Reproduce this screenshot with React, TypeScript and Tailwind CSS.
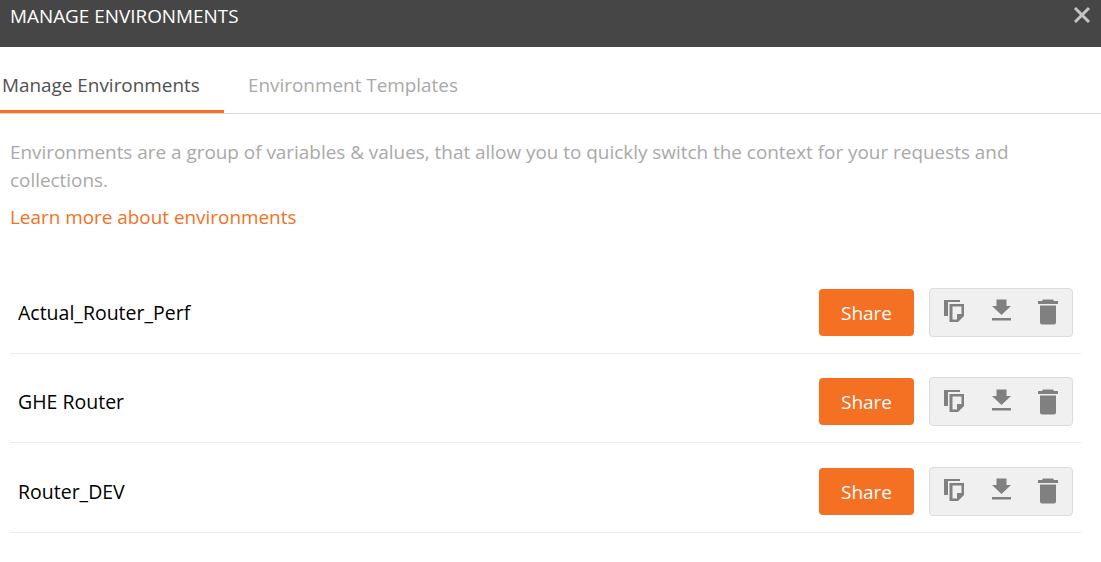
const environments = ["Actual_Router_Perf", "GHE Router", "Router_DEV"];

// all three icons share a 26px tall box so they line up inside the button group
const CopyIcon = () => (
  <svg width="20" height="26" viewBox="0 0 20 26" fill="none">
    <path d="M0 1h16v2H4v14H0z" fill="#808080" />
    <path d="M5.5 5h14.5v12l-6 6H5.5zM8.5 7.5v13h4.5V15h4.5V7.5z" fill="#808080" fillRule="evenodd" />
  </svg>
);

const DownloadIcon = () => (
  <svg width="19" height="26" viewBox="0 0 19 26" fill="none">
    <path d="M4.5 0.5h10v6.5h4.5l-9.5 9L0 7h4.5z" fill="#808080" />
    <rect x="0" y="19" width="19" height="2.5" fill="#808080" />
  </svg>
);

const TrashIcon = () => (
  <svg width="20" height="26" viewBox="0 0 20 26" fill="none">
    <path d="M5 0.5h10L16 2h4v3H0V2h4z" fill="#808080" />
    <path d="M2 6.5h16v17a2 2 0 0 1-2 2H4a2 2 0 0 1-2-2z" fill="#808080" />
  </svg>
);

const EnvRow = ({ name }: { name: string }) => (
  <div className="flex h-[89.5px] items-center justify-between border-b border-[#ececec] pl-2 pr-2 pt-[8px]">
    <span className="text-[19.5px] text-black">{name}</span>
    <div className="flex items-center gap-[15px]">
      <button className="h-[47px] w-[95px] rounded-[4px] bg-[#f47023] pt-[1px] text-[19px] text-white">Share</button>
      <div className="flex h-[49px] w-[144px] items-center justify-between rounded-[4px] border border-[#dcdcdc] bg-[#f0f0f0] px-[14px]">
        <CopyIcon />
        <DownloadIcon />
        <TrashIcon />
      </div>
    </div>
  </div>
);

export default function App() {
  return (
    <div className="h-[562px] w-[1101px] overflow-hidden bg-white font-['Open_Sans',sans-serif]">
      <header className="flex h-[47px] items-start justify-between bg-[#464646] pl-[10px] pr-[10px]">
        <h1 className="mt-[3px] text-[18.9px] leading-[26px] text-white">MANAGE ENVIRONMENTS</h1>
        <svg className="mt-[6px]" width="18" height="18" viewBox="0 0 18 18" fill="none">
          <path d="M2 2l14 14M16 2L2 16" stroke="#c4c4c4" strokeWidth="3" />
        </svg>
      </header>

      <nav className="flex h-[67px] items-stretch border-b border-[#d8d8d8]">
        <div className="flex w-[224px] items-center border-b-[3px] border-[#f47023] pl-[2px] pt-[13px] text-[18.9px] text-[#505050]">
          Manage Environments
        </div>
        <div className="flex items-center pl-[24px] pt-[11px] text-[18.9px] text-[#a9a9a9]">Environment Templates</div>
      </nav>

      <main className="px-[10px] pt-[24px]">
        <p className="text-[18.9px] leading-[28px] text-[#a9a9a9]">
          Environments are a group of variables &amp; values, that allow you to quickly switch the context for your requests and collections.
        </p>
        <a className="mt-[9px] block text-[18.9px] leading-[28px] text-[#f47023]">Learn more about environments</a>
        <div className="mt-[33px] w-[1071px]">
          {environments.map((name) => (
            <EnvRow key={name} name={name} />
          ))}
        </div>
      </main>
    </div>
  );
}
